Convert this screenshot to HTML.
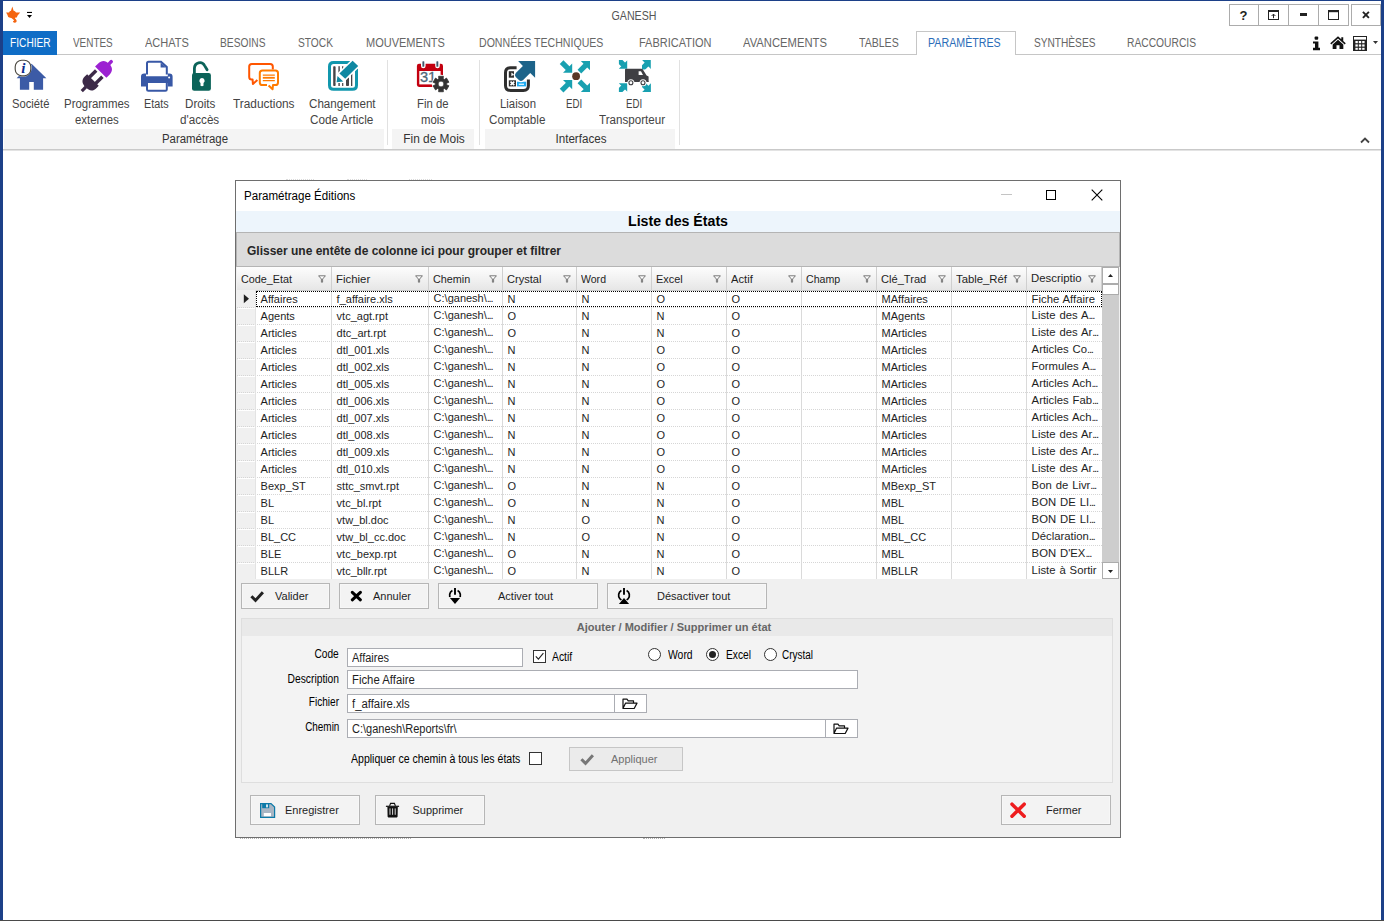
<!DOCTYPE html>
<html lang="fr"><head><meta charset="utf-8"><title>GANESH</title>
<style>
html,body{margin:0;padding:0;background:#fff;}
body{width:1384px;height:921px;overflow:hidden;font-family:"Liberation Sans",sans-serif;}
#app{position:relative;width:1384px;height:921px;overflow:hidden;background:#fff;}
#app div,#app span,#app svg{position:absolute;box-sizing:border-box;}
.t{white-space:nowrap;line-height:20px;height:20px;}
.e{position:static !important;letter-spacing:-1.25px;}

</style></head>
<body>
<div id="app">
<div style="left:0px;top:0px;width:1384px;height:1px;background:#1c4088;"></div>
<div style="left:0px;top:0px;width:3px;height:921px;background:#1c4088;"></div>
<div style="left:1381px;top:0px;width:3px;height:921px;background:#1c4088;"></div>
<div style="left:0px;top:920px;width:1384px;height:1px;background:#4a4a4a;"></div>
<span id="t1" class="t" style="top:6.0px;font-size:12px;color:#555;left:633.5px;transform-origin:50% 50%;transform:translateX(-50%) scaleX(0.8878);">GANESH</span>
<svg style="left:26px;top:11px" width="8" height="8" viewBox="0 0 8 8"><rect x="1" y="0.9" width="5" height="1.1" fill="#000"/><path d="M1 4h5L3.5 6.9z" fill="#000"/></svg>
<svg style="left:0px;top:0px" width="26" height="26" viewBox="0 0 26 26"><path d="M12.3 6.4L13.6 10.8C15 11 15.6 11.8 16 12.4L20.2 12.6L17.6 15.4L16.8 17.6L15.4 17.4L15 18.6C16.5 19.6 17 21 16.4 22C15.6 23 13.6 23 13 21.8C13 21 13.8 20.6 14.2 20.8C14 19.6 12.6 19.4 11.4 18L10 17.8L8.2 17L7.4 14.8L6.1 12.6L9 12.4C9.4 11.6 10 11 11 10.8Z" fill="#f4640f"/></svg>
<div style="left:1229px;top:4px;width:30px;height:22px;border:1px solid #acacac;background:#fff;"></div>
<div style="left:1258px;top:4px;width:31px;height:22px;border:1px solid #acacac;background:#fff;"></div>
<div style="left:1288px;top:4px;width:31px;height:22px;border:1px solid #acacac;background:#fff;"></div>
<div style="left:1318px;top:4px;width:31px;height:22px;border:1px solid #acacac;background:#fff;"></div>
<div style="left:1351px;top:4px;width:30px;height:22px;border:1px solid #acacac;background:#fff;"></div>
<span id="t2" class="t" style="top:5.5px;font-size:13px;color:#222;font-weight:bold;left:1243.6px;transform-origin:50% 50%;transform:translateX(-50%);">?</span>
<svg style="left:1268px;top:10px" width="11" height="10" viewBox="0 0 11 10"><rect x="0.5" y="1" width="10" height="8.5" fill="none" stroke="#222"/><rect x="0" y="0" width="11" height="2" fill="#222"/><path d="M5.5 4.2v4M3.6 6l1.9-1.9 1.9 1.9" fill="none" stroke="#222" stroke-width="1"/></svg>
<div style="left:1299.7px;top:13.4px;width:7.6px;height:2.2px;background:#222;"></div>
<svg style="left:1328px;top:10px" width="11" height="10" viewBox="0 0 11 10"><rect x="0.5" y="1" width="10" height="8.5" fill="none" stroke="#222"/><rect x="0" y="0" width="11" height="2.2" fill="#222"/></svg>
<svg style="left:1362px;top:10.6px" width="8" height="8" viewBox="0 0 8 8"><path d="M0.9 0.9l6 6M6.9 0.9l-6 6" stroke="#222" stroke-width="1.9"/></svg>
<div style="left:3px;top:54px;width:1378px;height:1px;background:#c6c6c6;"></div>
<div style="left:3px;top:31px;width:54px;height:24px;background:#0f6dc6;"></div>
<span id="t3" class="t" style="top:33.0px;font-size:12px;color:#fff;left:9.8px;transform-origin:0 50%;transform:scaleX(0.8479);">FICHIER</span>
<div style="left:916px;top:31px;width:100px;height:24px;background:#fff;border:1px solid #c6c6c6;border-bottom:none;"></div>
<span id="t4" class="t" style="top:33.0px;font-size:12px;color:#666;left:73.1px;transform-origin:0 50%;transform:scaleX(0.8268);">VENTES</span>
<span id="t5" class="t" style="top:33.0px;font-size:12px;color:#666;left:144.5px;transform-origin:0 50%;transform:scaleX(0.9206);">ACHATS</span>
<span id="t6" class="t" style="top:33.0px;font-size:12px;color:#666;left:220.0px;transform-origin:0 50%;transform:scaleX(0.8527);">BESOINS</span>
<span id="t7" class="t" style="top:33.0px;font-size:12px;color:#666;left:297.5px;transform-origin:0 50%;transform:scaleX(0.8511);">STOCK</span>
<span id="t8" class="t" style="top:33.0px;font-size:12px;color:#666;left:365.8px;transform-origin:0 50%;transform:scaleX(0.9173);">MOUVEMENTS</span>
<span id="t9" class="t" style="top:33.0px;font-size:12px;color:#666;left:479.1px;transform-origin:0 50%;transform:scaleX(0.8814);">DONNÉES TECHNIQUES</span>
<span id="t10" class="t" style="top:33.0px;font-size:12px;color:#666;left:639.0px;transform-origin:0 50%;transform:scaleX(0.9163);">FABRICATION</span>
<span id="t11" class="t" style="top:33.0px;font-size:12px;color:#666;left:743.0px;transform-origin:0 50%;transform:scaleX(0.9377);">AVANCEMENTS</span>
<span id="t12" class="t" style="top:33.0px;font-size:12px;color:#666;left:858.5px;transform-origin:0 50%;transform:scaleX(0.8795);">TABLES</span>
<span id="t13" class="t" style="top:33.0px;font-size:12px;color:#2b6cb8;left:928.3px;transform-origin:0 50%;transform:scaleX(0.8888);">PARAMÈTRES</span>
<span id="t14" class="t" style="top:33.0px;font-size:12px;color:#666;left:1033.5px;transform-origin:0 50%;transform:scaleX(0.8447);">SYNTHÈSES</span>
<span id="t15" class="t" style="top:33.0px;font-size:12px;color:#666;left:1126.5px;transform-origin:0 50%;transform:scaleX(0.8553);">RACCOURCIS</span>
<svg style="left:1312px;top:35.6px" width="9" height="15" viewBox="0 0 9 15"><rect x="2.6" y="0.4" width="3.6" height="3.4" rx="1" fill="#111"/><path d="M1 5.4h5.4v6.4H8V14.2H1v-2.4h2V7.6H1z" fill="#111"/></svg>
<svg style="left:1330px;top:36px" width="16" height="13.4" viewBox="0 0 18 14" preserveAspectRatio="none"><path d="M9 0.3L0.3 7.6l1.1 1.2L9 2.6l7.6 6.2 1.1-1.2-2.8-2.3V1.2h-2.2v2.2z" fill="#111"/><path d="M9 3.8L3 8.8V14h4.3V9.8h3.4V14H15V8.8z" fill="#111"/></svg>
<svg style="left:1353px;top:36px" width="14" height="15" viewBox="0 0 14 15"><rect x="0" y="0" width="14" height="15" fill="#222"/><rect x="1" y="1" width="12" height="2.6" fill="#fff"/><g fill="#fff"><rect x="2.4" y="5" width="2.4" height="2.2"/><rect x="5.8" y="5" width="2.4" height="2.2"/><rect x="9.2" y="5" width="2.4" height="2.2"/><rect x="2.4" y="8.4" width="2.4" height="2.2"/><rect x="5.8" y="8.4" width="2.4" height="2.2"/><rect x="9.2" y="8.4" width="2.4" height="2.2"/><rect x="2.4" y="11.8" width="2.4" height="2"/><rect x="5.8" y="11.8" width="2.4" height="2"/><rect x="9.2" y="11.8" width="2.4" height="2"/></g></svg>
<svg style="left:1373px;top:41px" width="5" height="3" viewBox="0 0 5 3"><path d="M0 0h5L2.5 3z" fill="#333"/></svg>
<svg style="left:1360px;top:136px" width="10" height="8" viewBox="0 0 10 8"><path d="M1 6.5l4-4 4 4" fill="none" stroke="#444" stroke-width="1.8"/></svg>
<div style="left:4px;top:129px;width:380px;height:19.5px;background:#f4f4f4;"></div>
<div style="left:392px;top:129px;width:81.5px;height:19.5px;background:#f4f4f4;"></div>
<div style="left:485px;top:129px;width:189.5px;height:19.5px;background:#f4f4f4;"></div>
<div style="left:387px;top:60px;width:1px;height:85px;background:#e1e1e1;"></div>
<div style="left:479px;top:60px;width:1px;height:85px;background:#e1e1e1;"></div>
<div style="left:679px;top:60px;width:1px;height:85px;background:#e1e1e1;"></div>
<div style="left:3px;top:149px;width:1378px;height:1px;background:#c9c9c9;"></div>
<div style="left:3px;top:150px;width:1378px;height:1px;background:#e3e3e3;"></div>
<span id="t16" class="t" style="top:128.5px;font-size:12px;color:#333;left:195.3px;transform-origin:50% 50%;transform:translateX(-50%) scaleX(0.9514);">Paramétrage</span>
<span id="t17" class="t" style="top:128.5px;font-size:12px;color:#333;left:434px;transform-origin:50% 50%;transform:translateX(-50%) scaleX(0.9914);">Fin de Mois</span>
<span id="t18" class="t" style="top:128.5px;font-size:12px;color:#333;left:580.7px;transform-origin:50% 50%;transform:translateX(-50%) scaleX(0.9677);">Interfaces</span>
<span id="t19" class="t" style="top:94.0px;font-size:12px;color:#444;left:11.8px;transform-origin:0 50%;transform:scaleX(0.9343);">Société</span>
<span id="t20" class="t" style="top:94.0px;font-size:12px;color:#444;left:63.8px;transform-origin:0 50%;transform:scaleX(0.9536);">Programmes</span>
<span id="t21" class="t" style="top:110.0px;font-size:12px;color:#444;left:74.89999999999999px;transform-origin:0 50%;transform:scaleX(0.9494);">externes</span>
<span id="t22" class="t" style="top:94.0px;font-size:12px;color:#444;left:143.60000000000002px;transform-origin:0 50%;transform:scaleX(0.8991);">Etats</span>
<span id="t23" class="t" style="top:94.0px;font-size:12px;color:#444;left:184.60000000000002px;transform-origin:0 50%;transform:scaleX(0.9699);">Droits</span>
<span id="t24" class="t" style="top:110.0px;font-size:12px;color:#444;left:180.3px;transform-origin:0 50%;transform:scaleX(0.9724);">d'accès</span>
<span id="t25" class="t" style="top:94.0px;font-size:12px;color:#444;left:232.60000000000002px;transform-origin:0 50%;transform:scaleX(0.9880);">Traductions</span>
<span id="t26" class="t" style="top:94.0px;font-size:12px;color:#444;left:308.7px;transform-origin:0 50%;transform:scaleX(0.9692);">Changement</span>
<span id="t27" class="t" style="top:110.0px;font-size:12px;color:#444;left:310.3px;transform-origin:0 50%;transform:scaleX(0.9783);">Code Article</span>
<span id="t28" class="t" style="top:94.0px;font-size:12px;color:#444;left:416.8px;transform-origin:0 50%;transform:scaleX(0.9443);">Fin de</span>
<span id="t29" class="t" style="top:110.0px;font-size:12px;color:#444;left:421.3px;transform-origin:0 50%;transform:scaleX(0.9470);">mois</span>
<span id="t30" class="t" style="top:94.0px;font-size:12px;color:#444;left:499.7px;transform-origin:0 50%;transform:scaleX(0.9466);">Liaison</span>
<span id="t31" class="t" style="top:110.0px;font-size:12px;color:#444;left:488.90000000000003px;transform-origin:0 50%;transform:scaleX(0.9719);">Comptable</span>
<span id="t32" class="t" style="top:94.0px;font-size:12px;color:#444;left:565.6999999999999px;transform-origin:0 50%;transform:scaleX(0.8094);">EDI</span>
<span id="t33" class="t" style="top:94.0px;font-size:12px;color:#444;left:626.0px;transform-origin:0 50%;transform:scaleX(0.8044);">EDI</span>
<span id="t34" class="t" style="top:110.0px;font-size:12px;color:#444;left:599.3px;transform-origin:0 50%;transform:scaleX(0.9670);">Transporteur</span>
<svg style="left:6px;top:56px" width="60" height="40" viewBox="0 0 60 40"><path d="M25.6 7.8L40.4 22.2H37.1V33.8H27.8V25.9H23.2V33.8H13.9V22.2H10.6Z" fill="#3c5ba6"/><circle cx="17" cy="12" r="8.7" fill="#fff"/><rect x="9.2" y="4.2" width="15.6" height="15.6" rx="6.6" fill="#fff" stroke="#4c4a42" stroke-width="1.15"/><text x="17.3" y="17" text-anchor="middle" font-family="Liberation Serif, serif" font-weight="bold" font-style="italic" font-size="15" fill="#0b2b8c">i</text></svg>
<svg style="left:68px;top:56px" width="60" height="40" viewBox="0 0 60 40"><g transform="translate(28.9,20) rotate(45)"><path d="M-8 -5.4H8V-9.5C8 -15 5 -17.3 0 -17.3C-5 -17.3 -8 -15 -8 -9.5Z" fill="#9c22d2"/><path d="M-1.7 -16.5V-20.4Q-1.7 -22 0 -22Q1.7 -22 1.7 -20.4V-16.5Z" fill="#9c22d2"/><path d="M-8.2 5.6H8.2V9C8.2 14 5 16 0 16C-5 16 -8.2 14 -8.2 9Z" fill="#3c2a48"/><path d="M-1.6 15.5V21.4H1.6V15.5Z" fill="#3c2a48"/><rect x="-6.1" y="-3.4" width="3.4" height="9.6" fill="#3c2a48"/><rect x="2.7" y="-3.4" width="3.4" height="9.6" fill="#3c2a48"/></g></svg>
<svg style="left:128px;top:56px" width="60" height="40" viewBox="0 0 60 40"><path d="M19 18.5V7.3Q19 5.8 20.5 5.8H33L38.8 11V18.5" fill="#fff" stroke="#3858a6" stroke-width="2"/><path d="M32.6 6.6V11.6H38Z" fill="#3858a6"/><path d="M13 30.4V20.6Q13 17.4 16.2 17.4H18V20.3H39.8V17.4H41.4Q44.6 17.4 44.6 20.6V30.4H39.8V27H18V30.4Z" fill="#3858a6"/><path d="M19 27V33.4Q19 34.7 20.4 34.7H37.4Q38.8 34.7 38.8 33.4V27" fill="#fff" stroke="#3858a6" stroke-width="2"/><circle cx="41.1" cy="21.4" r="1" fill="#fff"/></svg>
<svg style="left:172px;top:56px" width="60" height="40" viewBox="0 0 60 40"><rect x="20" y="17" width="18.9" height="17.8" rx="2.2" fill="#0b6359"/><path d="M22.4 18V12.4A5.5 5.9 0 0 1 32.6 9.6L35.1 13.8" fill="none" stroke="#0b6359" stroke-width="2.8" stroke-linecap="round"/><path d="M30 22.1a2.7 2.7 0 0 1 1.5 4.9V29.8Q30 30.6 28.5 29.8V27A2.7 2.7 0 0 1 30 22.1Z" fill="#fff"/></svg>
<svg style="left:234px;top:56px" width="60" height="40" viewBox="0 0 60 40"><path d="M38.8 13.4V10.6Q38.8 8 36.2 8H17.8Q15.2 8 15.2 10.6V21Q15.2 23.6 17.8 23.6H18.6L18.9 28L23.4 24" fill="none" stroke="#ff5500" stroke-width="2" stroke-linejoin="round"/><path d="M33 29H28.4Q25.8 29 25.8 26.4V17.1Q25.8 14.5 28.4 14.5H41.4Q44 14.5 44 17.1V26.4Q44 29 41.4 29H39L38.6 33.2L34.6 29.4" fill="#fff" stroke="#ff7a00" stroke-width="2" stroke-linejoin="round"/><path d="M28.8 19.1H40.8M28.8 24.6H40.8" stroke="#ff7a00" stroke-width="1.2"/><path d="M28.8 21.8H40.8" stroke="#ff7a00" stroke-width="1.8"/></svg>
<svg style="left:313px;top:56px" width="60" height="40" viewBox="0 0 60 40"><path d="M37.5 6.5H20.5Q16.5 6.5 16.5 10.5V29.3Q16.5 33.3 20.5 33.3H39.5Q43.5 33.3 43.5 29.3V12.5" fill="none" stroke="#1197ad" stroke-width="3"/><g fill="#454548"><rect x="20.2" y="10.2" width="2.4" height="19.8" rx="0.8"/><rect x="25.4" y="10.2" width="1.4" height="8"/><rect x="29.1" y="10.2" width="1.2" height="4"/><rect x="25.4" y="27" width="1.4" height="3"/><rect x="29.1" y="27" width="1.2" height="3"/><rect x="33" y="21.3" width="3" height="8.7" rx="0.8"/><rect x="38" y="17.8" width="1.3" height="12.2"/></g><path d="M39.6 4.8L45.2 10L32.2 22.8L26.4 17.4Z" fill="#0f88a2" stroke="#fff" stroke-width="3" paint-order="stroke"/><path d="M24.5 19.9L30.2 25.6L23.6 26.2Z" fill="#0f88a2" stroke="#fff" stroke-width="1.6" paint-order="stroke"/></svg>
<svg style="left:403px;top:56px" width="60" height="40" viewBox="0 0 60 40"><path d="M16 7.8H37.9Q40 7.8 40 9.9V28.8Q40 30.9 37.9 30.9H16Q13.9 30.9 13.9 28.8V9.9Q13.9 7.8 16 7.8Z" fill="#c3000f"/><rect x="16.3" y="15" width="21.3" height="13.4" fill="#fff"/><path d="M18 7V10A2.3 2.3 0 0 0 22.6 10V7Z M32.2 7V10A2.3 2.3 0 0 0 36.8 10V7Z" fill="#fff"/><rect x="19.4" y="5.2" width="1.9" height="5.6" rx="0.6" fill="#3e576b"/><rect x="33.4" y="5.2" width="1.9" height="5.6" rx="0.6" fill="#3e576b"/><text x="17" y="26.4" font-family="Liberation Sans, sans-serif" font-size="14.6" fill="#4d6679" stroke="#4d6679" stroke-width="0.3">31</text><circle cx="38" cy="28" r="9.2" fill="#fff"/><path d="M35.82 22.84 L35.61 20.26 L40.39 20.26 L40.18 22.84 L41.38 23.53 L43.50 22.06 L45.90 26.20 L43.56 27.31 L43.56 28.69 L45.90 29.80 L43.50 33.94 L41.38 32.47 L40.18 33.16 L40.39 35.74 L35.61 35.74 L35.82 33.16 L34.62 32.47 L32.50 33.94 L30.10 29.80 L32.44 28.69 L32.44 27.31 L30.10 26.20 L32.50 22.06 L34.62 23.53Z M35.10 28.00 a2.9 2.9 0 1 0 5.8 0 a2.9 2.9 0 1 0 -5.8 0Z" fill="#333" fill-rule="evenodd" stroke="#333" stroke-width="0.8" stroke-linejoin="round"/></svg>
<svg style="left:489px;top:56px" width="60" height="40" viewBox="0 0 60 40"><path d="M27.6 11.7H21.5Q16.5 11.7 16.5 16.7V29.4Q16.5 34.4 21.5 34.4H34.4Q39.4 34.4 39.4 29.4V23.4" fill="none" stroke="#2f2f2f" stroke-width="3"/><rect x="19.8" y="15.2" width="5.2" height="6.5" fill="#2f2f2f"/><path d="M22.4 16.6L25 18.4L22.4 20.2Z" fill="#fff"/><rect x="19.8" y="24.3" width="7.2" height="6.1" fill="#2f2f2f"/><path d="M21.5 25.6L25.3 29.2M25.3 25.6L21.5 29.2" stroke="#fff" stroke-width="1.6"/><rect x="28" y="25.7" width="9.2" height="4.7" fill="#1eaaf0"/><rect x="29.8" y="27.7" width="5.2" height="1.1" fill="#fff"/><path d="M29.1 5H46.1V21.7L41.2 16.9L33.9 24.2Q31.9 25.8 29.9 24.1L26.7 20.9Q25.1 19 26.8 17.1L33.9 9.9Z" fill="#1c6389" stroke="#fff" stroke-width="2.4" paint-order="stroke"/></svg>
<svg style="left:545px;top:56px" width="60" height="40" viewBox="0 0 60 40"><circle cx="31.1" cy="20.2" r="3.9" fill="#5a3625"/><path d="M27.20 16.70L18.00 16.70L27.20 7.50Z" fill="#18a0b0"/><path d="M21.22 14.40L14.75 7.93L18.43 4.25L24.90 10.72Z" fill="#18a0b0"/><path d="M27.20 24.10L18.00 24.10L27.20 33.30Z" fill="#18a0b0"/><path d="M24.90 30.08L18.43 36.55L14.75 32.87L21.22 26.40Z" fill="#18a0b0"/><path d="M45.00 5.00L35.80 5.00L45.00 14.20Z" fill="#18a0b0"/><path d="M42.70 10.98L36.23 17.45L32.55 13.77L39.02 7.30Z" fill="#18a0b0"/><path d="M45.00 35.90L35.80 35.90L45.00 26.70Z" fill="#18a0b0"/><path d="M39.02 33.60L32.55 27.13L36.23 23.45L42.70 29.92Z" fill="#18a0b0"/></svg>
<svg style="left:605px;top:56px" width="60" height="40" viewBox="0 0 60 40"><defs><clipPath id="ca"><rect x="13.9" y="4.1" width="8.6" height="8.8"/></clipPath><clipPath id="cb"><rect x="13.9" y="27.1" width="8.6" height="9"/></clipPath><clipPath id="cc"><rect x="37" y="4.1" width="8.9" height="9.5"/></clipPath><clipPath id="cd"><rect x="37" y="27.1" width="8.9" height="9"/></clipPath></defs><g clip-path="url(#ca)"><path d="M22.40 12.80L13.80 12.80L22.40 4.20Z" fill="#18a0b0"/><path d="M16.62 10.84L10.59 4.81L14.41 0.99L20.44 7.02Z" fill="#18a0b0"/></g><g clip-path="url(#cb)"><path d="M22.40 27.20L13.80 27.20L22.40 35.80Z" fill="#18a0b0"/><path d="M20.44 32.98L14.41 39.01L10.59 35.19L16.62 29.16Z" fill="#18a0b0"/></g><g clip-path="url(#cc)"><path d="M45.90 4.10L37.10 4.10L45.90 12.90Z" fill="#18a0b0"/><path d="M43.85 9.97L37.91 15.91L34.09 12.09L40.03 6.15Z" fill="#18a0b0"/></g><g clip-path="url(#cd)"><path d="M45.90 36.10L37.10 36.10L45.90 27.30Z" fill="#18a0b0"/><path d="M40.03 34.05L34.09 28.11L37.91 24.29L43.85 30.23Z" fill="#18a0b0"/></g><path d="M21 12.8H36.4Q37.4 12.8 38 13.8L41.6 19.4L43.2 20.2Q43.6 20.4 43.6 21V25.2Q43.9 25.4 43.9 26H20V13.8Q20 12.8 21 12.8Z" fill="#3f3f43"/><path d="M33.6 15.2H36L38 19.1H33.6Z" fill="#fff"/><circle cx="25.9" cy="26.7" r="3.5" fill="#fff"/><circle cx="25.9" cy="26.7" r="2" fill="#fff" stroke="#3f3f43" stroke-width="1.1"/><circle cx="38" cy="26.7" r="3.5" fill="#fff"/><circle cx="38" cy="26.7" r="2" fill="#fff" stroke="#3f3f43" stroke-width="1.1"/></svg>
<div style="left:286px;top:179px;width:28px;height:1px;border-top:1px dotted rgba(0,0,0,0.14);"></div>
<div style="left:347px;top:179px;width:20px;height:1px;border-top:1px dotted rgba(0,0,0,0.14);"></div>
<div style="left:409px;top:179px;width:23px;height:1px;border-top:1px dotted rgba(0,0,0,0.14);"></div>
<div style="left:240px;top:838px;width:171px;height:1px;border-top:1px dotted rgba(0,0,0,0.3);"></div>
<div style="left:643px;top:838px;width:22px;height:1px;border-top:1px dotted rgba(0,0,0,0.3);"></div>
<div style="left:235px;top:180px;width:886px;height:658px;background:#f0f0f0;border:1px solid #6e6e6e;"></div>
<div style="left:236px;top:181px;width:884px;height:30px;background:#fff;"></div>
<span id="t35" class="t" style="top:186.0px;font-size:12px;color:#000;left:244.3px;transform-origin:0 50%;transform:scaleX(0.9644);">Paramétrage Éditions</span>
<div style="left:1001px;top:194px;width:11px;height:1px;background:#c4c4c4;"></div>
<div style="left:1046px;top:190px;width:10px;height:10px;border:1px solid #000;"></div>
<svg style="left:1091px;top:189px" width="12" height="12" viewBox="0 0 12 12"><path d="M0.7 0.7l10.6 10.6M11.3 0.7L0.7 11.3" stroke="#000" stroke-width="1.1"/></svg>
<div style="left:236px;top:211px;width:884px;height:21px;background:#edf5fc;"></div>
<span id="t36" class="t" style="top:211.0px;font-size:14px;color:#000;font-weight:bold;left:678px;transform-origin:50% 50%;transform:translateX(-50%) scaleX(1.0119);">Liste des États</span>
<div style="left:236px;top:232px;width:884px;height:35px;background:#dcdcdc;border:1px solid #b4b4b4;"></div>
<span id="t37" class="t" style="top:240.5px;font-size:12.5px;color:#262626;font-weight:bold;left:246.5px;transform-origin:0 50%;transform:scaleX(0.9598);">Glisser une entête de colonne ici pour grouper et filtrer</span>
<div style="left:237px;top:267px;width:865px;height:312px;background:#fff;"></div>
<div style="left:237px;top:267px;width:865px;height:24px;background:linear-gradient(#fdfdfd,#f3f3f3 45%,#e6e6e6);border-bottom:1px solid #c9c9c9;"></div>
<span id="t38" class="t" style="top:269.0px;font-size:11px;color:#1e1e1e;left:240.6px;transform-origin:0 50%;transform:scaleX(0.9811);">Code_Etat</span>
<svg style="left:318px;top:275px" width="8" height="8" viewBox="0 0 8 8"><path d="M0.6 0.8h6.8L4.6 4v3.2H3.4V4z" fill="#fff" stroke="#777" stroke-width="1"/></svg>
<div style="left:331px;top:267px;width:1px;height:24px;background:#cfcfcf;"></div>
<span id="t39" class="t" style="top:269.0px;font-size:11px;color:#1e1e1e;left:336px;transform-origin:0 50%;transform:scaleX(1.0374);">Fichier</span>
<svg style="left:415px;top:275px" width="8" height="8" viewBox="0 0 8 8"><path d="M0.6 0.8h6.8L4.6 4v3.2H3.4V4z" fill="#fff" stroke="#777" stroke-width="1"/></svg>
<div style="left:428px;top:267px;width:1px;height:24px;background:#cfcfcf;"></div>
<span id="t40" class="t" style="top:269.0px;font-size:11px;color:#1e1e1e;left:433px;transform-origin:0 50%;transform:scaleX(0.9827);">Chemin</span>
<svg style="left:489px;top:275px" width="8" height="8" viewBox="0 0 8 8"><path d="M0.6 0.8h6.8L4.6 4v3.2H3.4V4z" fill="#fff" stroke="#777" stroke-width="1"/></svg>
<div style="left:502px;top:267px;width:1px;height:24px;background:#cfcfcf;"></div>
<span id="t41" class="t" style="top:269.0px;font-size:11px;color:#1e1e1e;left:507px;transform-origin:0 50%;transform:scaleX(1.0078);">Crystal</span>
<svg style="left:563px;top:275px" width="8" height="8" viewBox="0 0 8 8"><path d="M0.6 0.8h6.8L4.6 4v3.2H3.4V4z" fill="#fff" stroke="#777" stroke-width="1"/></svg>
<div style="left:576px;top:267px;width:1px;height:24px;background:#cfcfcf;"></div>
<span id="t42" class="t" style="top:269.0px;font-size:11px;color:#1e1e1e;left:581px;transform-origin:0 50%;transform:scaleX(0.9581);">Word</span>
<svg style="left:638px;top:275px" width="8" height="8" viewBox="0 0 8 8"><path d="M0.6 0.8h6.8L4.6 4v3.2H3.4V4z" fill="#fff" stroke="#777" stroke-width="1"/></svg>
<div style="left:651px;top:267px;width:1px;height:24px;background:#cfcfcf;"></div>
<span id="t43" class="t" style="top:269.0px;font-size:11px;color:#1e1e1e;left:656px;transform-origin:0 50%;transform:scaleX(0.9942);">Excel</span>
<svg style="left:713px;top:275px" width="8" height="8" viewBox="0 0 8 8"><path d="M0.6 0.8h6.8L4.6 4v3.2H3.4V4z" fill="#fff" stroke="#777" stroke-width="1"/></svg>
<div style="left:726px;top:267px;width:1px;height:24px;background:#cfcfcf;"></div>
<span id="t44" class="t" style="top:269.0px;font-size:11px;color:#1e1e1e;left:731px;transform-origin:0 50%;transform:scaleX(1.0161);">Actif</span>
<svg style="left:788px;top:275px" width="8" height="8" viewBox="0 0 8 8"><path d="M0.6 0.8h6.8L4.6 4v3.2H3.4V4z" fill="#fff" stroke="#777" stroke-width="1"/></svg>
<div style="left:801px;top:267px;width:1px;height:24px;background:#cfcfcf;"></div>
<span id="t45" class="t" style="top:269.0px;font-size:11px;color:#1e1e1e;left:806px;transform-origin:0 50%;transform:scaleX(0.9656);">Champ</span>
<svg style="left:863px;top:275px" width="8" height="8" viewBox="0 0 8 8"><path d="M0.6 0.8h6.8L4.6 4v3.2H3.4V4z" fill="#fff" stroke="#777" stroke-width="1"/></svg>
<div style="left:876px;top:267px;width:1px;height:24px;background:#cfcfcf;"></div>
<span id="t46" class="t" style="top:269.0px;font-size:11px;color:#1e1e1e;left:881px;transform-origin:0 50%;transform:scaleX(1.0102);">Clé_Trad</span>
<svg style="left:938px;top:275px" width="8" height="8" viewBox="0 0 8 8"><path d="M0.6 0.8h6.8L4.6 4v3.2H3.4V4z" fill="#fff" stroke="#777" stroke-width="1"/></svg>
<div style="left:951px;top:267px;width:1px;height:24px;background:#cfcfcf;"></div>
<span id="t47" class="t" style="top:269.0px;font-size:11px;color:#1e1e1e;left:956px;transform-origin:0 50%;transform:scaleX(1.0293);">Table_Réf</span>
<svg style="left:1013px;top:275px" width="8" height="8" viewBox="0 0 8 8"><path d="M0.6 0.8h6.8L4.6 4v3.2H3.4V4z" fill="#fff" stroke="#777" stroke-width="1"/></svg>
<div style="left:1026px;top:267px;width:1px;height:24px;background:#cfcfcf;"></div>
<span id="t48" class="t" style="top:268.0px;font-size:11px;color:#1e1e1e;left:1031px;transform-origin:0 50%;transform:scaleX(1.0346);">Descriptio</span>
<svg style="left:1088px;top:275px" width="8" height="8" viewBox="0 0 8 8"><path d="M0.6 0.8h6.8L4.6 4v3.2H3.4V4z" fill="#fff" stroke="#777" stroke-width="1"/></svg>
<div style="left:1101px;top:267px;width:1px;height:24px;background:#cfcfcf;"></div>
<div style="left:237px;top:290px;width:19px;height:289px;background:#f0f0f0;"></div>
<span id="t49" class="t" style="top:288.5px;font-size:11px;color:#1e1e1e;left:260.6px;transform-origin:0 50%;">Affaires</span>
<span id="t50" class="t" style="top:288.5px;font-size:11px;color:#1e1e1e;left:336.6px;transform-origin:0 50%;">f_affaire.xls</span>
<span id="t51" class="t" style="top:287.5px;font-size:11px;color:#1e1e1e;left:433.6px;transform-origin:0 50%;">C:\ganesh\<span class="e">...</span></span>
<span id="t52" class="t" style="top:288.5px;font-size:11px;color:#1e1e1e;left:507.6px;transform-origin:0 50%;">N</span>
<span id="t53" class="t" style="top:288.5px;font-size:11px;color:#1e1e1e;left:581.6px;transform-origin:0 50%;">N</span>
<span id="t54" class="t" style="top:288.5px;font-size:11px;color:#1e1e1e;left:656.6px;transform-origin:0 50%;">O</span>
<span id="t55" class="t" style="top:288.5px;font-size:11px;color:#1e1e1e;left:731.6px;transform-origin:0 50%;">O</span>
<span id="t56" class="t" style="top:288.5px;font-size:11px;color:#1e1e1e;left:881.6px;transform-origin:0 50%;">MAffaires</span>
<span id="t57" class="t" style="top:288.5px;font-size:11.3px;color:#1e1e1e;left:1031.6px;transform-origin:0 50%;word-spacing:0.8px;">Fiche Affaire</span>
<div style="left:237px;top:307px;width:865px;height:1px;border-top:1px dotted #d6d6d6;"></div>
<div style="left:238px;top:308px;width:17px;height:1px;background:#fff;"></div>
<span id="t58" class="t" style="top:305.5px;font-size:11px;color:#1e1e1e;left:260.6px;transform-origin:0 50%;">Agents</span>
<span id="t59" class="t" style="top:305.5px;font-size:11px;color:#1e1e1e;left:336.6px;transform-origin:0 50%;">vtc_agt.rpt</span>
<span id="t60" class="t" style="top:304.5px;font-size:11px;color:#1e1e1e;left:433.6px;transform-origin:0 50%;">C:\ganesh\<span class="e">...</span></span>
<span id="t61" class="t" style="top:305.5px;font-size:11px;color:#1e1e1e;left:507.6px;transform-origin:0 50%;">O</span>
<span id="t62" class="t" style="top:305.5px;font-size:11px;color:#1e1e1e;left:581.6px;transform-origin:0 50%;">N</span>
<span id="t63" class="t" style="top:305.5px;font-size:11px;color:#1e1e1e;left:656.6px;transform-origin:0 50%;">N</span>
<span id="t64" class="t" style="top:305.5px;font-size:11px;color:#1e1e1e;left:731.6px;transform-origin:0 50%;">O</span>
<span id="t65" class="t" style="top:305.5px;font-size:11px;color:#1e1e1e;left:881.6px;transform-origin:0 50%;">MAgents</span>
<span id="t66" class="t" style="top:304.5px;font-size:11.3px;color:#1e1e1e;left:1031.6px;transform-origin:0 50%;word-spacing:0.8px;">Liste des A<span class="e">...</span></span>
<div style="left:237px;top:324px;width:865px;height:1px;border-top:1px dotted #d6d6d6;"></div>
<div style="left:238px;top:325px;width:17px;height:1px;background:#fff;"></div>
<span id="t67" class="t" style="top:322.5px;font-size:11px;color:#1e1e1e;left:260.6px;transform-origin:0 50%;">Articles</span>
<span id="t68" class="t" style="top:322.5px;font-size:11px;color:#1e1e1e;left:336.6px;transform-origin:0 50%;">dtc_art.rpt</span>
<span id="t69" class="t" style="top:321.5px;font-size:11px;color:#1e1e1e;left:433.6px;transform-origin:0 50%;">C:\ganesh\<span class="e">...</span></span>
<span id="t70" class="t" style="top:322.5px;font-size:11px;color:#1e1e1e;left:507.6px;transform-origin:0 50%;">O</span>
<span id="t71" class="t" style="top:322.5px;font-size:11px;color:#1e1e1e;left:581.6px;transform-origin:0 50%;">N</span>
<span id="t72" class="t" style="top:322.5px;font-size:11px;color:#1e1e1e;left:656.6px;transform-origin:0 50%;">N</span>
<span id="t73" class="t" style="top:322.5px;font-size:11px;color:#1e1e1e;left:731.6px;transform-origin:0 50%;">O</span>
<span id="t74" class="t" style="top:322.5px;font-size:11px;color:#1e1e1e;left:881.6px;transform-origin:0 50%;">MArticles</span>
<span id="t75" class="t" style="top:321.5px;font-size:11.3px;color:#1e1e1e;left:1031.6px;transform-origin:0 50%;word-spacing:0.8px;">Liste des Ar<span class="e">...</span></span>
<div style="left:237px;top:341px;width:865px;height:1px;border-top:1px dotted #d6d6d6;"></div>
<div style="left:238px;top:342px;width:17px;height:1px;background:#fff;"></div>
<span id="t76" class="t" style="top:339.5px;font-size:11px;color:#1e1e1e;left:260.6px;transform-origin:0 50%;">Articles</span>
<span id="t77" class="t" style="top:339.5px;font-size:11px;color:#1e1e1e;left:336.6px;transform-origin:0 50%;">dtl_001.xls</span>
<span id="t78" class="t" style="top:338.5px;font-size:11px;color:#1e1e1e;left:433.6px;transform-origin:0 50%;">C:\ganesh\<span class="e">...</span></span>
<span id="t79" class="t" style="top:339.5px;font-size:11px;color:#1e1e1e;left:507.6px;transform-origin:0 50%;">N</span>
<span id="t80" class="t" style="top:339.5px;font-size:11px;color:#1e1e1e;left:581.6px;transform-origin:0 50%;">N</span>
<span id="t81" class="t" style="top:339.5px;font-size:11px;color:#1e1e1e;left:656.6px;transform-origin:0 50%;">O</span>
<span id="t82" class="t" style="top:339.5px;font-size:11px;color:#1e1e1e;left:731.6px;transform-origin:0 50%;">O</span>
<span id="t83" class="t" style="top:339.5px;font-size:11px;color:#1e1e1e;left:881.6px;transform-origin:0 50%;">MArticles</span>
<span id="t84" class="t" style="top:338.5px;font-size:11.3px;color:#1e1e1e;left:1031.6px;transform-origin:0 50%;word-spacing:0.8px;">Articles Co<span class="e">...</span></span>
<div style="left:237px;top:358px;width:865px;height:1px;border-top:1px dotted #d6d6d6;"></div>
<div style="left:238px;top:359px;width:17px;height:1px;background:#fff;"></div>
<span id="t85" class="t" style="top:356.5px;font-size:11px;color:#1e1e1e;left:260.6px;transform-origin:0 50%;">Articles</span>
<span id="t86" class="t" style="top:356.5px;font-size:11px;color:#1e1e1e;left:336.6px;transform-origin:0 50%;">dtl_002.xls</span>
<span id="t87" class="t" style="top:355.5px;font-size:11px;color:#1e1e1e;left:433.6px;transform-origin:0 50%;">C:\ganesh\<span class="e">...</span></span>
<span id="t88" class="t" style="top:356.5px;font-size:11px;color:#1e1e1e;left:507.6px;transform-origin:0 50%;">N</span>
<span id="t89" class="t" style="top:356.5px;font-size:11px;color:#1e1e1e;left:581.6px;transform-origin:0 50%;">N</span>
<span id="t90" class="t" style="top:356.5px;font-size:11px;color:#1e1e1e;left:656.6px;transform-origin:0 50%;">O</span>
<span id="t91" class="t" style="top:356.5px;font-size:11px;color:#1e1e1e;left:731.6px;transform-origin:0 50%;">O</span>
<span id="t92" class="t" style="top:356.5px;font-size:11px;color:#1e1e1e;left:881.6px;transform-origin:0 50%;">MArticles</span>
<span id="t93" class="t" style="top:355.5px;font-size:11.3px;color:#1e1e1e;left:1031.6px;transform-origin:0 50%;word-spacing:0.8px;">Formules A<span class="e">...</span></span>
<div style="left:237px;top:375px;width:865px;height:1px;border-top:1px dotted #d6d6d6;"></div>
<div style="left:238px;top:376px;width:17px;height:1px;background:#fff;"></div>
<span id="t94" class="t" style="top:373.5px;font-size:11px;color:#1e1e1e;left:260.6px;transform-origin:0 50%;">Articles</span>
<span id="t95" class="t" style="top:373.5px;font-size:11px;color:#1e1e1e;left:336.6px;transform-origin:0 50%;">dtl_005.xls</span>
<span id="t96" class="t" style="top:372.5px;font-size:11px;color:#1e1e1e;left:433.6px;transform-origin:0 50%;">C:\ganesh\<span class="e">...</span></span>
<span id="t97" class="t" style="top:373.5px;font-size:11px;color:#1e1e1e;left:507.6px;transform-origin:0 50%;">N</span>
<span id="t98" class="t" style="top:373.5px;font-size:11px;color:#1e1e1e;left:581.6px;transform-origin:0 50%;">N</span>
<span id="t99" class="t" style="top:373.5px;font-size:11px;color:#1e1e1e;left:656.6px;transform-origin:0 50%;">O</span>
<span id="t100" class="t" style="top:373.5px;font-size:11px;color:#1e1e1e;left:731.6px;transform-origin:0 50%;">O</span>
<span id="t101" class="t" style="top:373.5px;font-size:11px;color:#1e1e1e;left:881.6px;transform-origin:0 50%;">MArticles</span>
<span id="t102" class="t" style="top:372.5px;font-size:11.3px;color:#1e1e1e;left:1031.6px;transform-origin:0 50%;word-spacing:0.8px;">Articles Ach<span class="e">...</span></span>
<div style="left:237px;top:392px;width:865px;height:1px;border-top:1px dotted #d6d6d6;"></div>
<div style="left:238px;top:393px;width:17px;height:1px;background:#fff;"></div>
<span id="t103" class="t" style="top:390.5px;font-size:11px;color:#1e1e1e;left:260.6px;transform-origin:0 50%;">Articles</span>
<span id="t104" class="t" style="top:390.5px;font-size:11px;color:#1e1e1e;left:336.6px;transform-origin:0 50%;">dtl_006.xls</span>
<span id="t105" class="t" style="top:389.5px;font-size:11px;color:#1e1e1e;left:433.6px;transform-origin:0 50%;">C:\ganesh\<span class="e">...</span></span>
<span id="t106" class="t" style="top:390.5px;font-size:11px;color:#1e1e1e;left:507.6px;transform-origin:0 50%;">N</span>
<span id="t107" class="t" style="top:390.5px;font-size:11px;color:#1e1e1e;left:581.6px;transform-origin:0 50%;">N</span>
<span id="t108" class="t" style="top:390.5px;font-size:11px;color:#1e1e1e;left:656.6px;transform-origin:0 50%;">O</span>
<span id="t109" class="t" style="top:390.5px;font-size:11px;color:#1e1e1e;left:731.6px;transform-origin:0 50%;">O</span>
<span id="t110" class="t" style="top:390.5px;font-size:11px;color:#1e1e1e;left:881.6px;transform-origin:0 50%;">MArticles</span>
<span id="t111" class="t" style="top:389.5px;font-size:11.3px;color:#1e1e1e;left:1031.6px;transform-origin:0 50%;word-spacing:0.8px;">Articles Fab<span class="e">...</span></span>
<div style="left:237px;top:409px;width:865px;height:1px;border-top:1px dotted #d6d6d6;"></div>
<div style="left:238px;top:410px;width:17px;height:1px;background:#fff;"></div>
<span id="t112" class="t" style="top:407.5px;font-size:11px;color:#1e1e1e;left:260.6px;transform-origin:0 50%;">Articles</span>
<span id="t113" class="t" style="top:407.5px;font-size:11px;color:#1e1e1e;left:336.6px;transform-origin:0 50%;">dtl_007.xls</span>
<span id="t114" class="t" style="top:406.5px;font-size:11px;color:#1e1e1e;left:433.6px;transform-origin:0 50%;">C:\ganesh\<span class="e">...</span></span>
<span id="t115" class="t" style="top:407.5px;font-size:11px;color:#1e1e1e;left:507.6px;transform-origin:0 50%;">N</span>
<span id="t116" class="t" style="top:407.5px;font-size:11px;color:#1e1e1e;left:581.6px;transform-origin:0 50%;">N</span>
<span id="t117" class="t" style="top:407.5px;font-size:11px;color:#1e1e1e;left:656.6px;transform-origin:0 50%;">O</span>
<span id="t118" class="t" style="top:407.5px;font-size:11px;color:#1e1e1e;left:731.6px;transform-origin:0 50%;">O</span>
<span id="t119" class="t" style="top:407.5px;font-size:11px;color:#1e1e1e;left:881.6px;transform-origin:0 50%;">MArticles</span>
<span id="t120" class="t" style="top:406.5px;font-size:11.3px;color:#1e1e1e;left:1031.6px;transform-origin:0 50%;word-spacing:0.8px;">Articles Ach<span class="e">...</span></span>
<div style="left:237px;top:426px;width:865px;height:1px;border-top:1px dotted #d6d6d6;"></div>
<div style="left:238px;top:427px;width:17px;height:1px;background:#fff;"></div>
<span id="t121" class="t" style="top:424.5px;font-size:11px;color:#1e1e1e;left:260.6px;transform-origin:0 50%;">Articles</span>
<span id="t122" class="t" style="top:424.5px;font-size:11px;color:#1e1e1e;left:336.6px;transform-origin:0 50%;">dtl_008.xls</span>
<span id="t123" class="t" style="top:423.5px;font-size:11px;color:#1e1e1e;left:433.6px;transform-origin:0 50%;">C:\ganesh\<span class="e">...</span></span>
<span id="t124" class="t" style="top:424.5px;font-size:11px;color:#1e1e1e;left:507.6px;transform-origin:0 50%;">N</span>
<span id="t125" class="t" style="top:424.5px;font-size:11px;color:#1e1e1e;left:581.6px;transform-origin:0 50%;">N</span>
<span id="t126" class="t" style="top:424.5px;font-size:11px;color:#1e1e1e;left:656.6px;transform-origin:0 50%;">O</span>
<span id="t127" class="t" style="top:424.5px;font-size:11px;color:#1e1e1e;left:731.6px;transform-origin:0 50%;">O</span>
<span id="t128" class="t" style="top:424.5px;font-size:11px;color:#1e1e1e;left:881.6px;transform-origin:0 50%;">MArticles</span>
<span id="t129" class="t" style="top:423.5px;font-size:11.3px;color:#1e1e1e;left:1031.6px;transform-origin:0 50%;word-spacing:0.8px;">Liste des Ar<span class="e">...</span></span>
<div style="left:237px;top:443px;width:865px;height:1px;border-top:1px dotted #d6d6d6;"></div>
<div style="left:238px;top:444px;width:17px;height:1px;background:#fff;"></div>
<span id="t130" class="t" style="top:441.5px;font-size:11px;color:#1e1e1e;left:260.6px;transform-origin:0 50%;">Articles</span>
<span id="t131" class="t" style="top:441.5px;font-size:11px;color:#1e1e1e;left:336.6px;transform-origin:0 50%;">dtl_009.xls</span>
<span id="t132" class="t" style="top:440.5px;font-size:11px;color:#1e1e1e;left:433.6px;transform-origin:0 50%;">C:\ganesh\<span class="e">...</span></span>
<span id="t133" class="t" style="top:441.5px;font-size:11px;color:#1e1e1e;left:507.6px;transform-origin:0 50%;">N</span>
<span id="t134" class="t" style="top:441.5px;font-size:11px;color:#1e1e1e;left:581.6px;transform-origin:0 50%;">N</span>
<span id="t135" class="t" style="top:441.5px;font-size:11px;color:#1e1e1e;left:656.6px;transform-origin:0 50%;">O</span>
<span id="t136" class="t" style="top:441.5px;font-size:11px;color:#1e1e1e;left:731.6px;transform-origin:0 50%;">O</span>
<span id="t137" class="t" style="top:441.5px;font-size:11px;color:#1e1e1e;left:881.6px;transform-origin:0 50%;">MArticles</span>
<span id="t138" class="t" style="top:440.5px;font-size:11.3px;color:#1e1e1e;left:1031.6px;transform-origin:0 50%;word-spacing:0.8px;">Liste des Ar<span class="e">...</span></span>
<div style="left:237px;top:460px;width:865px;height:1px;border-top:1px dotted #d6d6d6;"></div>
<div style="left:238px;top:461px;width:17px;height:1px;background:#fff;"></div>
<span id="t139" class="t" style="top:458.5px;font-size:11px;color:#1e1e1e;left:260.6px;transform-origin:0 50%;">Articles</span>
<span id="t140" class="t" style="top:458.5px;font-size:11px;color:#1e1e1e;left:336.6px;transform-origin:0 50%;">dtl_010.xls</span>
<span id="t141" class="t" style="top:457.5px;font-size:11px;color:#1e1e1e;left:433.6px;transform-origin:0 50%;">C:\ganesh\<span class="e">...</span></span>
<span id="t142" class="t" style="top:458.5px;font-size:11px;color:#1e1e1e;left:507.6px;transform-origin:0 50%;">N</span>
<span id="t143" class="t" style="top:458.5px;font-size:11px;color:#1e1e1e;left:581.6px;transform-origin:0 50%;">N</span>
<span id="t144" class="t" style="top:458.5px;font-size:11px;color:#1e1e1e;left:656.6px;transform-origin:0 50%;">O</span>
<span id="t145" class="t" style="top:458.5px;font-size:11px;color:#1e1e1e;left:731.6px;transform-origin:0 50%;">O</span>
<span id="t146" class="t" style="top:458.5px;font-size:11px;color:#1e1e1e;left:881.6px;transform-origin:0 50%;">MArticles</span>
<span id="t147" class="t" style="top:457.5px;font-size:11.3px;color:#1e1e1e;left:1031.6px;transform-origin:0 50%;word-spacing:0.8px;">Liste des Ar<span class="e">...</span></span>
<div style="left:237px;top:477px;width:865px;height:1px;border-top:1px dotted #d6d6d6;"></div>
<div style="left:238px;top:478px;width:17px;height:1px;background:#fff;"></div>
<span id="t148" class="t" style="top:475.5px;font-size:11px;color:#1e1e1e;left:260.6px;transform-origin:0 50%;">Bexp_ST</span>
<span id="t149" class="t" style="top:475.5px;font-size:11px;color:#1e1e1e;left:336.6px;transform-origin:0 50%;">sttc_smvt.rpt</span>
<span id="t150" class="t" style="top:474.5px;font-size:11px;color:#1e1e1e;left:433.6px;transform-origin:0 50%;">C:\ganesh\<span class="e">...</span></span>
<span id="t151" class="t" style="top:475.5px;font-size:11px;color:#1e1e1e;left:507.6px;transform-origin:0 50%;">O</span>
<span id="t152" class="t" style="top:475.5px;font-size:11px;color:#1e1e1e;left:581.6px;transform-origin:0 50%;">N</span>
<span id="t153" class="t" style="top:475.5px;font-size:11px;color:#1e1e1e;left:656.6px;transform-origin:0 50%;">N</span>
<span id="t154" class="t" style="top:475.5px;font-size:11px;color:#1e1e1e;left:731.6px;transform-origin:0 50%;">O</span>
<span id="t155" class="t" style="top:475.5px;font-size:11px;color:#1e1e1e;left:881.6px;transform-origin:0 50%;">MBexp_ST</span>
<span id="t156" class="t" style="top:474.5px;font-size:11.3px;color:#1e1e1e;left:1031.6px;transform-origin:0 50%;word-spacing:0.8px;">Bon de Livr<span class="e">...</span></span>
<div style="left:237px;top:494px;width:865px;height:1px;border-top:1px dotted #d6d6d6;"></div>
<div style="left:238px;top:495px;width:17px;height:1px;background:#fff;"></div>
<span id="t157" class="t" style="top:492.5px;font-size:11px;color:#1e1e1e;left:260.6px;transform-origin:0 50%;">BL</span>
<span id="t158" class="t" style="top:492.5px;font-size:11px;color:#1e1e1e;left:336.6px;transform-origin:0 50%;">vtc_bl.rpt</span>
<span id="t159" class="t" style="top:491.5px;font-size:11px;color:#1e1e1e;left:433.6px;transform-origin:0 50%;">C:\ganesh\<span class="e">...</span></span>
<span id="t160" class="t" style="top:492.5px;font-size:11px;color:#1e1e1e;left:507.6px;transform-origin:0 50%;">O</span>
<span id="t161" class="t" style="top:492.5px;font-size:11px;color:#1e1e1e;left:581.6px;transform-origin:0 50%;">N</span>
<span id="t162" class="t" style="top:492.5px;font-size:11px;color:#1e1e1e;left:656.6px;transform-origin:0 50%;">N</span>
<span id="t163" class="t" style="top:492.5px;font-size:11px;color:#1e1e1e;left:731.6px;transform-origin:0 50%;">O</span>
<span id="t164" class="t" style="top:492.5px;font-size:11px;color:#1e1e1e;left:881.6px;transform-origin:0 50%;">MBL</span>
<span id="t165" class="t" style="top:491.5px;font-size:11.3px;color:#1e1e1e;left:1031.6px;transform-origin:0 50%;word-spacing:0.8px;">BON DE LI<span class="e">...</span></span>
<div style="left:237px;top:511px;width:865px;height:1px;border-top:1px dotted #d6d6d6;"></div>
<div style="left:238px;top:512px;width:17px;height:1px;background:#fff;"></div>
<span id="t166" class="t" style="top:509.5px;font-size:11px;color:#1e1e1e;left:260.6px;transform-origin:0 50%;">BL</span>
<span id="t167" class="t" style="top:509.5px;font-size:11px;color:#1e1e1e;left:336.6px;transform-origin:0 50%;">vtw_bl.doc</span>
<span id="t168" class="t" style="top:508.5px;font-size:11px;color:#1e1e1e;left:433.6px;transform-origin:0 50%;">C:\ganesh\<span class="e">...</span></span>
<span id="t169" class="t" style="top:509.5px;font-size:11px;color:#1e1e1e;left:507.6px;transform-origin:0 50%;">N</span>
<span id="t170" class="t" style="top:509.5px;font-size:11px;color:#1e1e1e;left:581.6px;transform-origin:0 50%;">O</span>
<span id="t171" class="t" style="top:509.5px;font-size:11px;color:#1e1e1e;left:656.6px;transform-origin:0 50%;">N</span>
<span id="t172" class="t" style="top:509.5px;font-size:11px;color:#1e1e1e;left:731.6px;transform-origin:0 50%;">O</span>
<span id="t173" class="t" style="top:509.5px;font-size:11px;color:#1e1e1e;left:881.6px;transform-origin:0 50%;">MBL</span>
<span id="t174" class="t" style="top:508.5px;font-size:11.3px;color:#1e1e1e;left:1031.6px;transform-origin:0 50%;word-spacing:0.8px;">BON DE LI<span class="e">...</span></span>
<div style="left:237px;top:528px;width:865px;height:1px;border-top:1px dotted #d6d6d6;"></div>
<div style="left:238px;top:529px;width:17px;height:1px;background:#fff;"></div>
<span id="t175" class="t" style="top:526.5px;font-size:11px;color:#1e1e1e;left:260.6px;transform-origin:0 50%;">BL_CC</span>
<span id="t176" class="t" style="top:526.5px;font-size:11px;color:#1e1e1e;left:336.6px;transform-origin:0 50%;">vtw_bl_cc.doc</span>
<span id="t177" class="t" style="top:525.5px;font-size:11px;color:#1e1e1e;left:433.6px;transform-origin:0 50%;">C:\ganesh\<span class="e">...</span></span>
<span id="t178" class="t" style="top:526.5px;font-size:11px;color:#1e1e1e;left:507.6px;transform-origin:0 50%;">N</span>
<span id="t179" class="t" style="top:526.5px;font-size:11px;color:#1e1e1e;left:581.6px;transform-origin:0 50%;">O</span>
<span id="t180" class="t" style="top:526.5px;font-size:11px;color:#1e1e1e;left:656.6px;transform-origin:0 50%;">N</span>
<span id="t181" class="t" style="top:526.5px;font-size:11px;color:#1e1e1e;left:731.6px;transform-origin:0 50%;">O</span>
<span id="t182" class="t" style="top:526.5px;font-size:11px;color:#1e1e1e;left:881.6px;transform-origin:0 50%;">MBL_CC</span>
<span id="t183" class="t" style="top:525.5px;font-size:11.3px;color:#1e1e1e;left:1031.6px;transform-origin:0 50%;word-spacing:0.8px;">Déclaration<span class="e">...</span></span>
<div style="left:237px;top:545px;width:865px;height:1px;border-top:1px dotted #d6d6d6;"></div>
<div style="left:238px;top:546px;width:17px;height:1px;background:#fff;"></div>
<span id="t184" class="t" style="top:543.5px;font-size:11px;color:#1e1e1e;left:260.6px;transform-origin:0 50%;">BLE</span>
<span id="t185" class="t" style="top:543.5px;font-size:11px;color:#1e1e1e;left:336.6px;transform-origin:0 50%;">vtc_bexp.rpt</span>
<span id="t186" class="t" style="top:542.5px;font-size:11px;color:#1e1e1e;left:433.6px;transform-origin:0 50%;">C:\ganesh\<span class="e">...</span></span>
<span id="t187" class="t" style="top:543.5px;font-size:11px;color:#1e1e1e;left:507.6px;transform-origin:0 50%;">O</span>
<span id="t188" class="t" style="top:543.5px;font-size:11px;color:#1e1e1e;left:581.6px;transform-origin:0 50%;">N</span>
<span id="t189" class="t" style="top:543.5px;font-size:11px;color:#1e1e1e;left:656.6px;transform-origin:0 50%;">N</span>
<span id="t190" class="t" style="top:543.5px;font-size:11px;color:#1e1e1e;left:731.6px;transform-origin:0 50%;">O</span>
<span id="t191" class="t" style="top:543.5px;font-size:11px;color:#1e1e1e;left:881.6px;transform-origin:0 50%;">MBL</span>
<span id="t192" class="t" style="top:542.5px;font-size:11.3px;color:#1e1e1e;left:1031.6px;transform-origin:0 50%;word-spacing:0.8px;">BON D'EX<span class="e">...</span></span>
<div style="left:237px;top:562px;width:865px;height:1px;border-top:1px dotted #d6d6d6;"></div>
<div style="left:238px;top:563px;width:17px;height:1px;background:#fff;"></div>
<span id="t193" class="t" style="top:560.5px;font-size:11px;color:#1e1e1e;left:260.6px;transform-origin:0 50%;">BLLR</span>
<span id="t194" class="t" style="top:560.5px;font-size:11px;color:#1e1e1e;left:336.6px;transform-origin:0 50%;">vtc_bllr.rpt</span>
<span id="t195" class="t" style="top:559.5px;font-size:11px;color:#1e1e1e;left:433.6px;transform-origin:0 50%;">C:\ganesh\<span class="e">...</span></span>
<span id="t196" class="t" style="top:560.5px;font-size:11px;color:#1e1e1e;left:507.6px;transform-origin:0 50%;">O</span>
<span id="t197" class="t" style="top:560.5px;font-size:11px;color:#1e1e1e;left:581.6px;transform-origin:0 50%;">N</span>
<span id="t198" class="t" style="top:560.5px;font-size:11px;color:#1e1e1e;left:656.6px;transform-origin:0 50%;">N</span>
<span id="t199" class="t" style="top:560.5px;font-size:11px;color:#1e1e1e;left:731.6px;transform-origin:0 50%;">O</span>
<span id="t200" class="t" style="top:560.5px;font-size:11px;color:#1e1e1e;left:881.6px;transform-origin:0 50%;">MBLLR</span>
<span id="t201" class="t" style="top:559.5px;font-size:11.3px;color:#1e1e1e;left:1031.6px;transform-origin:0 50%;word-spacing:0.8px;">Liste à Sortir</span>
<div style="left:331px;top:290px;width:1px;height:289px;background:#dadada;"></div>
<div style="left:428px;top:290px;width:1px;height:289px;background:#dadada;"></div>
<div style="left:502px;top:290px;width:1px;height:289px;background:#dadada;"></div>
<div style="left:576px;top:290px;width:1px;height:289px;background:#dadada;"></div>
<div style="left:651px;top:290px;width:1px;height:289px;background:#dadada;"></div>
<div style="left:726px;top:290px;width:1px;height:289px;background:#dadada;"></div>
<div style="left:801px;top:290px;width:1px;height:289px;background:#dadada;"></div>
<div style="left:876px;top:290px;width:1px;height:289px;background:#dadada;"></div>
<div style="left:951px;top:290px;width:1px;height:289px;background:#dadada;"></div>
<div style="left:1026px;top:290px;width:1px;height:289px;background:#dadada;"></div>
<div style="left:255px;top:290px;width:1px;height:289px;background:#e3e3e3;"></div>
<div style="left:256px;top:291px;width:846px;height:16px;border:1px dotted #000;"></div>
<svg style="left:243px;top:294px" width="7" height="10" viewBox="0 0 7 10"><path d="M0.8 0.3v9L6 4.8z" fill="#222"/></svg>
<div style="left:1102px;top:267px;width:17px;height:312px;background:#cdcdcd;"></div>
<div style="left:1102px;top:267px;width:17px;height:17px;background:#fff;border:1px solid #acacac;"></div>
<div style="left:1102px;top:284px;width:17px;height:11px;background:#fff;border:1px solid #acacac;"></div>
<div style="left:1102px;top:562px;width:17px;height:17px;background:#fff;border:1px solid #acacac;"></div>
<svg style="left:1108px;top:273.5px" width="5" height="3" viewBox="0 0 5 3"><path d="M0 3h5L2.5 0z" fill="#222"/></svg>
<svg style="left:1108px;top:569.5px" width="5" height="3" viewBox="0 0 5 3"><path d="M0 0h5L2.5 3z" fill="#222"/></svg>
<div style="left:241px;top:583px;width:89px;height:26px;background:#f3f3f3;border:1px solid #b6b6b6;box-shadow:inset 0 0 0 1px #f7f7f7;"></div>
<svg style="left:249px;top:589px" width="17" height="14" viewBox="0 0 17 14"><path d="M2.4 7.3L6.5 11.4L13.9 3.3" fill="none" stroke="#222" stroke-width="3" stroke-linejoin="miter"/></svg>
<span id="t202" class="t" style="top:586.0px;font-size:11px;color:#1e1e1e;left:275px;transform-origin:0 50%;">Valider</span>
<div style="left:339px;top:583px;width:90px;height:26px;background:#f3f3f3;border:1px solid #b6b6b6;box-shadow:inset 0 0 0 1px #f7f7f7;"></div>
<svg style="left:349.6px;top:590px" width="13" height="12" viewBox="0 0 13 12"><path d="M2.3 2.3L10.4 9.8M10.4 2.3L2.3 9.8" stroke="#000" stroke-width="3.1" stroke-linecap="round"/></svg>
<span id="t203" class="t" style="top:586.0px;font-size:11px;color:#1e1e1e;left:373px;transform-origin:0 50%;">Annuler</span>
<div style="left:438px;top:583px;width:160px;height:26px;background:#f3f3f3;border:1px solid #b6b6b6;box-shadow:inset 0 0 0 1px #f7f7f7;"></div>
<svg style="left:448px;top:587px" width="14" height="18" viewBox="0 0 14 18"><path d="M4.4 3.5A5.4 5.4 0 1 0 9.6 3.5" fill="none" stroke="#000" stroke-width="1.7"/><path d="M7 1V7.8" stroke="#000" stroke-width="1.9"/><rect x="0" y="10.1" width="14" height="8" fill="#f3f3f3"/><path d="M1.9 11.1H12.1L7 17.1Z" fill="#000"/></svg>
<span id="t204" class="t" style="top:586.0px;font-size:11px;color:#1e1e1e;left:498px;transform-origin:0 50%;">Activer tout</span>
<div style="left:607px;top:583px;width:160px;height:26px;background:#f3f3f3;border:1px solid #b6b6b6;box-shadow:inset 0 0 0 1px #f7f7f7;"></div>
<svg style="left:617px;top:587px" width="14" height="18" viewBox="0 0 14 18"><path d="M4.4 3.5A5.4 5.4 0 1 0 9.6 3.5" fill="none" stroke="#000" stroke-width="1.7"/><path d="M7 1V7.8" stroke="#000" stroke-width="1.9"/><path d="M7 11.1L12.1 16.9H1.9Z" fill="#000" stroke="#f3f3f3" stroke-width="1.6" paint-order="stroke"/></svg>
<span id="t205" class="t" style="top:586.0px;font-size:11px;color:#1e1e1e;left:657px;transform-origin:0 50%;">Désactiver tout</span>
<div style="left:241px;top:618px;width:872px;height:165px;background:#f3f3f3;border:1px solid #dedede;"></div>
<div style="left:242px;top:619px;width:870px;height:17px;background:#e9e9e9;"></div>
<span id="t206" class="t" style="top:617.0px;font-size:11px;color:#666;font-weight:bold;left:673.5px;transform-origin:50% 50%;transform:translateX(-50%) scaleX(1.0034);">Ajouter / Modifier / Supprimer un état</span>
<span id="t207" class="t" style="top:644.0px;font-size:12px;color:#000;right:1045px;transform-origin:100% 50%;transform:scaleX(0.8471);">Code</span>
<span id="t208" class="t" style="top:668.5px;font-size:12px;color:#000;right:1045px;transform-origin:100% 50%;transform:scaleX(0.8579);">Description</span>
<span id="t209" class="t" style="top:692.0px;font-size:12px;color:#000;right:1045px;transform-origin:100% 50%;transform:scaleX(0.8385);">Fichier</span>
<span id="t210" class="t" style="top:717.0px;font-size:12px;color:#000;right:1045px;transform-origin:100% 50%;transform:scaleX(0.8269);">Chemin</span>
<div style="left:347px;top:648px;width:176px;height:19px;background:#fff;border:1px solid #abadb3;"></div>
<span id="t211" class="t" style="top:648.0px;font-size:12px;color:#1e1e1e;left:352px;transform-origin:0 50%;transform:scaleX(0.9143);">Affaires</span>
<div style="left:347px;top:670px;width:511px;height:19px;background:#fff;border:1px solid #abadb3;"></div>
<span id="t212" class="t" style="top:669.5px;font-size:12px;color:#1e1e1e;left:352px;transform-origin:0 50%;transform:scaleX(0.9446);">Fiche Affaire</span>
<div style="left:347px;top:694px;width:300px;height:19px;background:#fff;border:1px solid #abadb3;"></div>
<span id="t213" class="t" style="top:694.0px;font-size:12px;color:#1e1e1e;left:351.5px;transform-origin:0 50%;transform:scaleX(0.9451);">f_affaire.xls</span>
<div style="left:614px;top:694px;width:1px;height:19px;background:#abadb3;"></div>
<div style="left:347px;top:719px;width:511px;height:19px;background:#fff;border:1px solid #abadb3;"></div>
<span id="t214" class="t" style="top:718.5px;font-size:12px;color:#1e1e1e;left:352px;transform-origin:0 50%;transform:scaleX(0.9170);">C:\ganesh\Reports\fr\</span>
<div style="left:825px;top:719px;width:1px;height:19px;background:#abadb3;"></div>
<svg style="left:622px;top:698px" width="16" height="12" viewBox="0 0 16 12"><path d="M1 10.5V1.2h4l1.2 1.6h5.3v2.2M1 10.5l2.6-5.4h11.4l-2.8 5.4z" fill="none" stroke="#111" stroke-width="1.2" stroke-linejoin="round"/></svg>
<svg style="left:833px;top:723px" width="16" height="12" viewBox="0 0 16 12"><path d="M1 10.5V1.2h4l1.2 1.6h5.3v2.2M1 10.5l2.6-5.4h11.4l-2.8 5.4z" fill="none" stroke="#111" stroke-width="1.2" stroke-linejoin="round"/></svg>
<div style="left:533px;top:650px;width:13px;height:13px;background:#fff;border:1px solid #333;"></div>
<svg style="left:534px;top:651px" width="11" height="11" viewBox="0 0 11 11"><path d="M1.8 5.4l2.6 2.8 5-6" fill="none" stroke="#222" stroke-width="1.1"/></svg>
<span id="t215" class="t" style="top:646.5px;font-size:12px;color:#000;left:552px;transform-origin:0 50%;transform:scaleX(0.8653);">Actif</span>
<div style="left:648.0px;top:648px;width:13px;height:13px;border-radius:50%;background:#fff;border:1px solid #333;"></div>
<span id="t216" class="t" style="top:645.0px;font-size:12px;color:#000;left:667.6px;transform-origin:0 50%;transform:scaleX(0.8646);">Word</span>
<div style="left:705.5px;top:648px;width:13px;height:13px;border-radius:50%;background:#fff;border:1px solid #333;"></div>
<div style="left:708.5px;top:651px;width:7px;height:7px;border-radius:50%;background:#222;"></div>
<span id="t217" class="t" style="top:645.0px;font-size:12px;color:#000;left:725.5px;transform-origin:0 50%;transform:scaleX(0.8520);">Excel</span>
<div style="left:764.0px;top:648px;width:13px;height:13px;border-radius:50%;background:#fff;border:1px solid #333;"></div>
<span id="t218" class="t" style="top:645.0px;font-size:12px;color:#000;left:782.3px;transform-origin:0 50%;transform:scaleX(0.8301);">Crystal</span>
<span id="t219" class="t" style="top:749.0px;font-size:12px;color:#000;left:350.6px;transform-origin:0 50%;transform:scaleX(0.8787);">Appliquer ce chemin à tous les états</span>
<div style="left:529px;top:752px;width:13px;height:13px;background:#fff;border:1px solid #333;"></div>
<div style="left:569px;top:747px;width:114px;height:24px;background:#ebebeb;border:1px solid #c6c6c6;"></div>
<svg style="left:579px;top:752px" width="17" height="14" viewBox="0 0 17 14"><path d="M2.4 7.3L6.5 11.4L13.9 3.3" fill="none" stroke="#777" stroke-width="3" stroke-linejoin="miter"/></svg>
<span id="t220" class="t" style="top:749.0px;font-size:11px;color:#707070;left:611px;transform-origin:0 50%;">Appliquer</span>
<div style="left:250px;top:795px;width:110px;height:30px;background:#f3f3f3;border:1px solid #b6b6b6;box-shadow:inset 0 0 0 1px #f7f7f7;"></div>
<svg style="left:260px;top:803px" width="16" height="15" viewBox="0 0 16 15"><path d="M0.6 0.6H11L14.6 4V14.4H0.6Z" fill="#a9b6c4" stroke="#0c7aa8" stroke-width="1.2"/><rect x="2.2" y="0.8" width="7" height="4.4" fill="#0c7aa8"/><rect x="6.2" y="1.4" width="1.6" height="3" fill="#fff"/><rect x="3.8" y="10" width="7.2" height="3.2" fill="#fff"/></svg>
<span id="t221" class="t" style="top:800.0px;font-size:11px;color:#1e1e1e;left:285px;transform-origin:0 50%;">Enregistrer</span>
<div style="left:375px;top:795px;width:110px;height:30px;background:#f3f3f3;border:1px solid #b6b6b6;box-shadow:inset 0 0 0 1px #f7f7f7;"></div>
<svg style="left:385px;top:802px" width="15" height="16" viewBox="0 0 15 16"><path d="M0.9 3.7H14.1V4.9H0.9Z" fill="#111"/><path d="M4.6 3.9L5.6 1.4H9.4L10.4 3.9" fill="none" stroke="#111" stroke-width="1.2"/><path d="M2.4 4.8H12.8L12.6 14.6Q12.6 15.4 11.8 15.4H3.4Q2.6 15.4 2.6 14.6Z" fill="#111"/><path d="M5 6.4V12.8M7.6 6.4V12.8M10.2 6.4V12.8" stroke="#f3f3f3" stroke-width="0.9"/></svg>
<span id="t222" class="t" style="top:800.0px;font-size:11px;color:#1e1e1e;left:412.5px;transform-origin:0 50%;">Supprimer</span>
<div style="left:1001px;top:795px;width:110px;height:30px;background:#f3f3f3;border:1px solid #b6b6b6;box-shadow:inset 0 0 0 1px #f7f7f7;"></div>
<svg style="left:1009px;top:801px" width="19" height="19" viewBox="0 0 19 19"><path d="M3 3.2L15.2 15.2M15.2 3.2L3 15.2" stroke="#ee1c1e" stroke-width="3.5" stroke-linecap="round"/></svg>
<span id="t223" class="t" style="top:800.0px;font-size:11px;color:#1e1e1e;left:1046px;transform-origin:0 50%;">Fermer</span>
</div>
</body></html>
